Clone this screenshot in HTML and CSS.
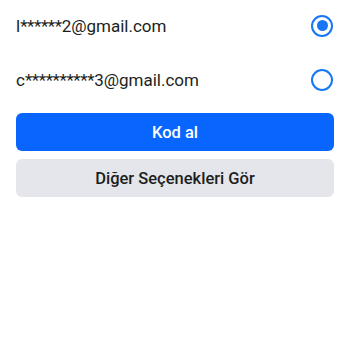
FILE: index.html
```html
<!DOCTYPE html>
<html lang="tr">

<head>
    <meta charset="UTF-8">
    <meta name="viewport" content="width=device-width, initial-scale=1.0">
    <title>Kod al</title>
    <link rel="stylesheet" href="styles.css">
</head>

<body>
    <div class="page">
        <div class="accounts">
            <label class="row">
                <span class="email">l<span class="mask">******</span>2@gmail.com</span>
                <span class="radio checked"></span>
            </label>
            <label class="row">
                <span class="email">c<span class="mask">**********</span>3@gmail.com</span>
                <span class="radio"></span>
            </label>
        </div>
        <div class="actions">
            <div class="btn primary">Kod al</div>
            <div class="btn secondary">Diğer Seçenekleri Gör</div>
        </div>
    </div>
</body>

</html>
```

FILE: styles.css
```css
body {
    margin: 0;
    background-color: #fff;
    font-family: Roboto, "Liberation Sans", sans-serif;
    color: #1c1e21;
}

.page {
    padding: 0 16px;
}

.accounts {
    display: flex;
    flex-direction: column;
    gap: 3px;
}

.row {
    height: 51px;
    display: flex;
    align-items: center;
    justify-content: space-between;
}

.email {
    font-size: 17px;
}

.mask {
    letter-spacing: -0.4px;
}

.radio {
    width: 18px;
    height: 18px;
    border: 2px solid #1877f2;
    border-radius: 50%;
    margin-right: 1px;
    display: flex;
    justify-content: center;
    align-items: center;
}

.radio.checked::after {
    content: "";
    width: 11px;
    height: 11px;
    border-radius: 50%;
    background-color: #1877f2;
}

.actions {
    margin-top: 8px;
    display: flex;
    flex-direction: column;
    gap: 8px;
}

.btn {
    height: 38px;
    border-radius: 6px;
    display: flex;
    justify-content: center;
    align-items: center;
    font-size: 16.5px;
    font-weight: 500;
    user-select: none;
}

.primary {
    background-color: #0866ff;
    color: #fff;
}

.secondary {
    background-color: #e4e6eb;
    color: #1c1e21;
}
```
